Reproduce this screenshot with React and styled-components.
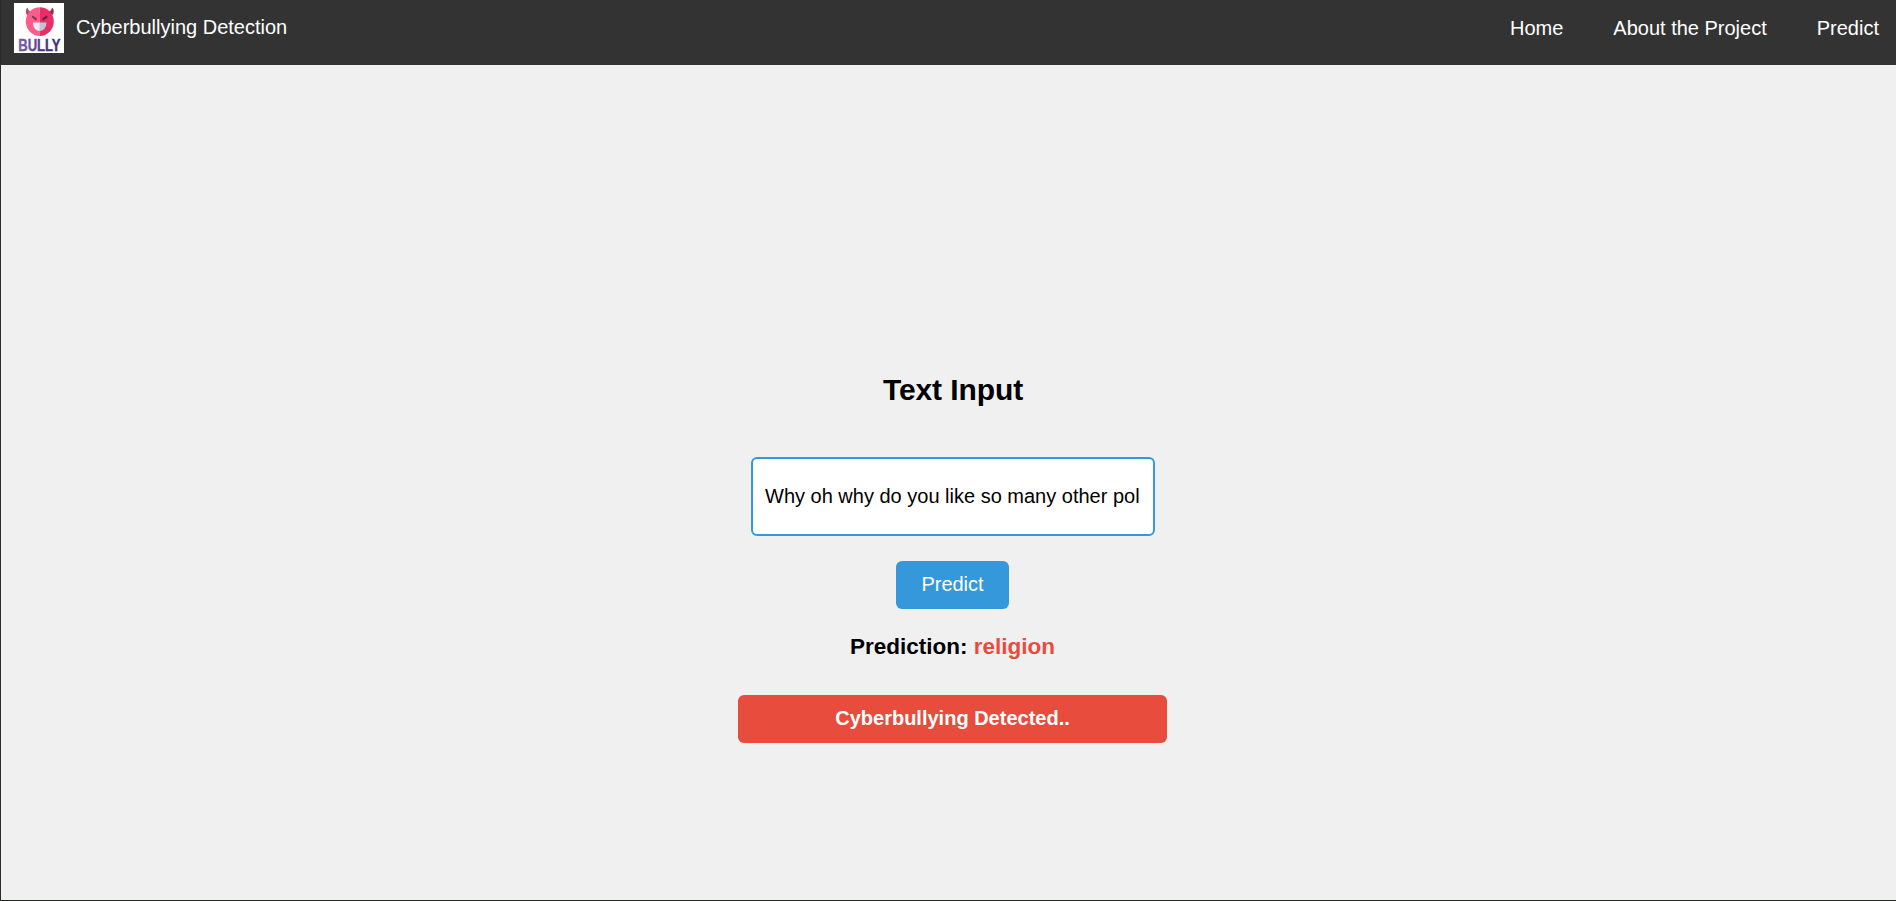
import React from "react";
import styled, { createGlobalStyle } from "styled-components";

const GlobalStyle = createGlobalStyle`
  *, *::before, *::after { box-sizing: border-box; }
  body {
    margin: 0;
    font-family: "Liberation Sans", Arial, sans-serif;
    font-size: 20px;
    line-height: 24px;
    color: #000;
    background: #f0f0f0;
  }
`;

const Page = styled.div`
  display: flex;
  flex-direction: column;
  height: 901px;
  border-left: 1px solid #2a2b2b;
  border-bottom: 1px solid #22251c;
  background: #f0f0f0;
  overflow: hidden;
`;

const Header = styled.header`
  display: flex;
  justify-content: space-between;
  align-items: flex-start;
  height: 65px;
  padding: 3px 17px 0 13px;
  background: #333;
  color: #fff;
`;

const Brand = styled.div`
  display: flex;
  align-items: flex-start;
  gap: 12px;
`;

const BrandName = styled.span`
  padding-top: 12px;
`;

const Logo = styled.svg`
  display: block;
  width: 50px;
  height: 50px;
  overflow: visible;
`;

const Nav = styled.nav`
  display: flex;
  gap: 50px;
  padding-top: 13px;
`;

const NavLink = styled.a`
  color: #fff;
  text-decoration: none;
`;

const Main = styled.main`
  display: flex;
  flex-direction: column;
  align-items: center;
  flex: 1;
  padding: 308px 0 0 8px;
`;

const Title = styled.h2`
  margin: 0 0 50px;
  padding-left: 1px;
  font-size: 30px;
  line-height: 34px;
  letter-spacing: -0.1px;
`;

const TextField = styled.input`
  width: 404px;
  height: 79px;
  padding: 0 12px 0 12.5px;
  border: 2px solid #3498db;
  border-radius: 6px;
  outline: none;
  background: #fff;
  color: #000;
  font: inherit;
`;

const PredictButton = styled.button`
  width: 113px;
  height: 48px;
  margin-top: 25px;
  padding: 11px 0 13px;
  border: 0;
  border-radius: 6px;
  background: #3498db;
  color: #fff;
  font: inherit;
`;

const Prediction = styled.h3`
  margin: 24px 0 34px;
  font-size: 22.5px;
  line-height: 28px;
`;

const Label = styled.span`
  color: #e74c3c;
`;

const Alert = styled.div`
  width: 429px;
  height: 48px;
  padding-top: 11px;
  border-radius: 6px;
  background: #e74c3c;
  color: #fff;
  font-weight: bold;
  text-align: center;
`;

function BullyLogo() {
  return (
    <Logo viewBox="0 0 50 50" role="img" aria-label="Bully">
      <defs>
        <linearGradient id="wordmark" x1="0" x2="1">
          <stop offset="0" stopColor="#7560a6" />
          <stop offset="0.45" stopColor="#604a92" />
          <stop offset="0.55" stopColor="#4b357e" />
          <stop offset="1" stopColor="#452e76" />
        </linearGradient>
      </defs>
      <rect width="50" height="50" fill="#fff" />
      <path d="M13.4 4.6C11 7.4 11.4 11.4 14.2 13L18.6 9.2C15.6 9 14.2 7.4 13.4 4.6Z" fill="#c04874" />
      <path d="M38.2 4.6C40.6 7.4 40.2 11.4 37.4 13L33 9.2C36 9 37.4 7.4 38.2 4.6Z" fill="#962c55" />
      <path d="M25.8 4.2A14 14.4 0 0 0 25.8 33Z" fill="#ff5c8d" />
      <path d="M25.8 4.2A14 14.4 0 0 1 25.8 33Z" fill="#e92e67" />
      <path d="M18.2 13.4L22.8 16.6" stroke="#8b3155" strokeWidth="2" />
      <path d="M33.2 13.4L28.6 16.6" stroke="#65203f" strokeWidth="2" />
      <path d="M19 19.6H25.8V28C21.4 28 19 24.5 19 19.6Z" fill="#e8eef3" />
      <path d="M25.8 19.6H32.4C32.4 24.5 29.8 28 25.8 28Z" fill="#b9c9d4" />
      <text
        x="4.2"
        y="47.7"
        textLength="42.4"
        lengthAdjust="spacingAndGlyphs"
        fontFamily='"Liberation Sans", Arial, sans-serif'
        fontSize="16.4"
        fontWeight="700"
        fill="url(#wordmark)"
        stroke="url(#wordmark)"
        strokeWidth="0.4"
        strokeLinejoin="round"
      >
        BULLY
      </text>
    </Logo>
  );
}

export default function App() {
  return (
    <>
      <GlobalStyle />
      <Page>
        <Header>
          <Brand>
            <BullyLogo />
            <BrandName>Cyberbullying Detection</BrandName>
          </Brand>
          <Nav>
            <NavLink>Home</NavLink>
            <NavLink>About the Project</NavLink>
            <NavLink>Predict</NavLink>
          </Nav>
        </Header>
        <Main>
          <Title>Text Input</Title>
          <TextField readOnly value="Why oh why do you like so many other pol" />
          <PredictButton>Predict</PredictButton>
          <Prediction>
            Prediction: <Label>religion</Label>
          </Prediction>
          <Alert>Cyberbullying Detected..</Alert>
        </Main>
      </Page>
    </>
  );
}
